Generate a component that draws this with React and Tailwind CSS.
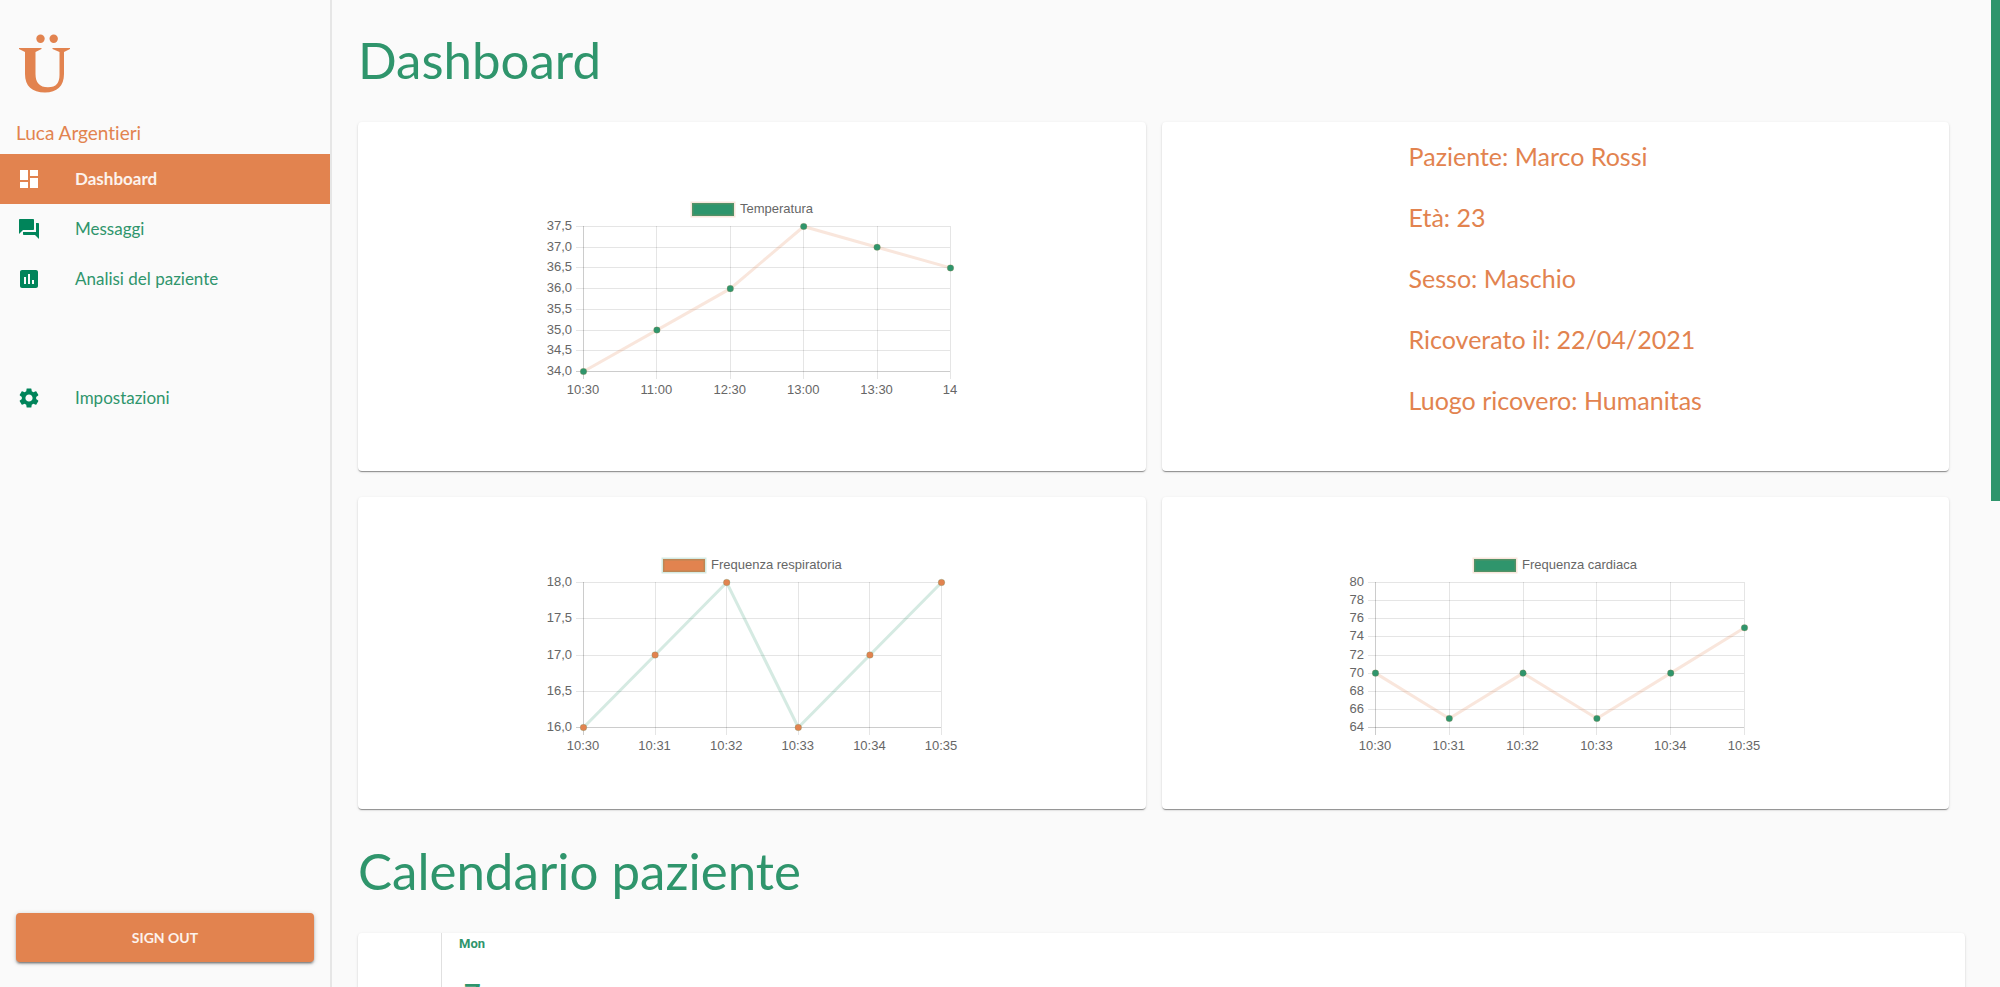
import { MdDashboard, MdQuestionAnswer, MdAssessment, MdSettings } from "react-icons/md";

const navItems = [
  { label: "Dashboard", icon: MdDashboard, active: true },
  { label: "Messaggi", icon: MdQuestionAnswer },
  { label: "Analisi del paziente", icon: MdAssessment },
];

const patient = [
  "Paziente: Marco Rossi",
  "Età: 23",
  "Sesso: Maschio",
  "Ricoverato il: 22/04/2021",
  "Luogo ricovero: Humanitas",
];

const orange = "#e2834f";
const green = "#2f956c";
const softOrange = "rgba(226,131,79,0.2)";
const softGreen = "rgba(47,149,108,0.2)";

const charts = {
  temperature: {
    title: "Temperatura",
    legendX: 151,
    fill: green,
    stroke: softOrange,
    left: 42,
    right: 409,
    labels: ["10:30", "11:00", "12:30", "13:00", "13:30", "14"],
    ticks: ["37,5", "37,0", "36,5", "36,0", "35,5", "35,0", "34,5", "34,0"],
    values: [34, 35, 36, 37.5, 37, 36.5],
    min: 34,
    max: 37.5,
  },
  breathing: {
    title: "Frequenza respiratoria",
    legendX: 122,
    fill: orange,
    stroke: softGreen,
    left: 42,
    right: 400,
    labels: ["10:30", "10:31", "10:32", "10:33", "10:34", "10:35"],
    ticks: ["18,0", "17,5", "17,0", "16,5", "16,0"],
    values: [16, 17, 18, 16, 17, 18],
    min: 16,
    max: 18,
  },
  heart: {
    title: "Frequenza cardiaca",
    legendX: 130,
    fill: green,
    stroke: softOrange,
    left: 31,
    right: 400,
    labels: ["10:30", "10:31", "10:32", "10:33", "10:34", "10:35"],
    ticks: ["80", "78", "76", "74", "72", "70", "68", "66", "64"],
    values: [70, 65, 70, 65, 70, 75],
    min: 64,
    max: 80,
  },
};

function LineChart({ title, legendX, fill, stroke, left, right, labels, ticks, values, min, max }) {
  const top = 34;
  const bottom = 179;
  const x = (i) => left + ((right - left) * i) / (labels.length - 1);
  const tickY = (i) => Math.round(top + ((bottom - top) * i) / (ticks.length - 1)) + 0.5;
  const y = (v) => bottom + 0.5 - ((v - min) / (max - min)) * (bottom - top);
  const points = values.map((v, i) => `${x(i) + 0.5},${y(v)}`).join(" ");

  return (
    <svg
      role="img"
      aria-label={title}
      viewBox="-4 0 430 210"
      className="h-[210px] w-[430px] font-['Liberation_Sans',sans-serif] text-[13px]"
    >
      <rect x={legendX} y="11" width="42" height="13" fill={fill} />
      <rect x={legendX} y="11" width="42" height="13" fill="none" stroke={stroke} strokeWidth="3" />
      <text x={legendX + 48} y="21" fill="#666">{title}</text>
      {ticks.map((t, i) => (
        <g key={t}>
          <line
            x1={left - 7}
            x2={right}
            y1={tickY(i)}
            y2={tickY(i)}
            stroke={i === ticks.length - 1 ? "rgba(0,0,0,0.2)" : "rgba(0,0,0,0.1)"}
          />
          <text x={left - 11} y={tickY(i) + 3.5} textAnchor="end" fill="#666">{t}</text>
        </g>
      ))}
      {labels.map((t, i) => (
        <g key={t}>
          <line
            x1={Math.round(x(i)) + 0.5}
            x2={Math.round(x(i)) + 0.5}
            y1={top}
            y2={bottom + 8}
            stroke={i === 0 ? "rgba(0,0,0,0.2)" : "rgba(0,0,0,0.1)"}
          />
          <text x={x(i)} y={bottom + 23} textAnchor="middle" fill="#666">{t}</text>
        </g>
      ))}
      <polyline points={points} fill="none" stroke={stroke} strokeWidth="3" />
      {values.map((v, i) => (
        <circle key={i} cx={x(i) + 0.5} cy={y(v)} r="3.3" fill={fill} stroke={stroke} />
      ))}
    </svg>
  );
}

const cardShadow =
  "rounded bg-white shadow-[0_2px_1px_-1px_rgba(0,0,0,0.25),0_1px_1px_0_rgba(0,0,0,0.18),0_1px_3px_0_rgba(0,0,0,0.12)]";

function ChartCard({ chart, className }) {
  return (
    <section className={`flex justify-center ${cardShadow} ${className}`}>
      <LineChart {...chart} />
    </section>
  );
}

function NavLink({ label, icon: Icon, active }) {
  return (
    <a
      href="#"
      aria-current={active ? "page" : undefined}
      className={`flex h-[50px] items-center pl-[17px] text-[17px] ${
        active ? "bg-[#e2834f] font-bold text-white/90" : "text-[#2f956c]"
      }`}
    >
      <Icon size={24} className={active ? "text-white" : "text-[#00845a]"} />
      <span className="ml-[34px]">{label}</span>
    </a>
  );
}

export default function App() {
  return (
    <div className="relative flex h-screen overflow-hidden bg-[#fafafa] font-[Lato,sans-serif] [font-variant-ligatures:none]">
      <aside className="flex w-[332px] shrink-0 flex-col border-r-2 border-[#e6e6e6]">
        <svg
          role="img"
          aria-label="Ü"
          viewBox="0 0 52 60"
          className="mt-[34px] ml-[19px] h-[60px] w-[52px]"
          fill={orange}
        >
          <circle cx="21.5" cy="4.8" r="4.2" />
          <circle cx="34.7" cy="4.8" r="4.2" />
          <path d="M0 14H22.5V15L16.500 18V40C16.500 48.500 20.500 53.300 29 53.300C37.500 53.300 40.500 48.500 40.500 41V18L33.500 15V14H51V15L45 18V40C45 52 38 58.500 26 58.500C13 58.500 6 52 6 40V18L0 15Z" />
        </svg>
        <p className="mt-[26px] pl-4 text-[19px] leading-[26px] text-[#e2834f]">Luca Argentieri</p>
        <nav className="mt-2">
          {navItems.map((item) => (
            <NavLink key={item.label} {...item} />
          ))}
          <div className="mt-[69px]">
            <NavLink label="Impostazioni" icon={MdSettings} />
          </div>
        </nav>
        <button
          type="button"
          className="mx-4 mt-auto mb-[25px] h-[49px] rounded bg-[#e2834f] text-[14px] font-bold text-white/90 shadow-[0_3px_1px_-2px_rgba(0,0,0,0.2),0_2px_2px_0_rgba(0,0,0,0.24),0_1px_5px_0_rgba(0,0,0,0.2)]"
        >
          SIGN OUT
        </button>
      </aside>

      <main className="min-w-0 flex-1 pr-[35px] pl-[26px]">
        <h1 className="pt-[30px] text-[51px] leading-[60px] text-[#2f956c]">Dashboard</h1>
        <div className="mt-8 mr-4 grid grid-cols-2 gap-x-4 gap-y-[26px]">
          <ChartCard chart={charts.temperature} className="h-[349px] items-center" />
          <section className={`flex h-[349px] justify-center pt-4 ${cardShadow}`}>
            <ul className="flex flex-col gap-[25px] text-[25px] leading-[36px] text-[#e2834f]">
              {patient.map((line) => (
                <li key={line}>{line}</li>
              ))}
            </ul>
          </section>
          <ChartCard chart={charts.breathing} className="h-[312px] items-center" />
          <ChartCard chart={charts.heart} className="h-[312px] items-center" />
        </div>
        <h2 className="mt-[32px] text-[51px] leading-[60px] text-[#2f956c]">Calendario paziente</h2>
        <section className={`mt-8 flex h-[600px] ${cardShadow}`}>
          <div className="w-[84px] border-r border-[#e0e0e0]" />
          <div className="px-[17px] pt-[3px] font-[Roboto,sans-serif] text-[#2f956c]">
            <p className="text-[13px] leading-[16px] font-bold">Mon</p>
            <p className="mt-[25px] pl-[5px] text-[30px] leading-[36px] font-medium">7</p>
          </div>
        </section>
      </main>

      <div aria-hidden="true" className="absolute top-0 right-0 h-[501px] w-[9px] bg-[#2f956c]" />
    </div>
  );
}
